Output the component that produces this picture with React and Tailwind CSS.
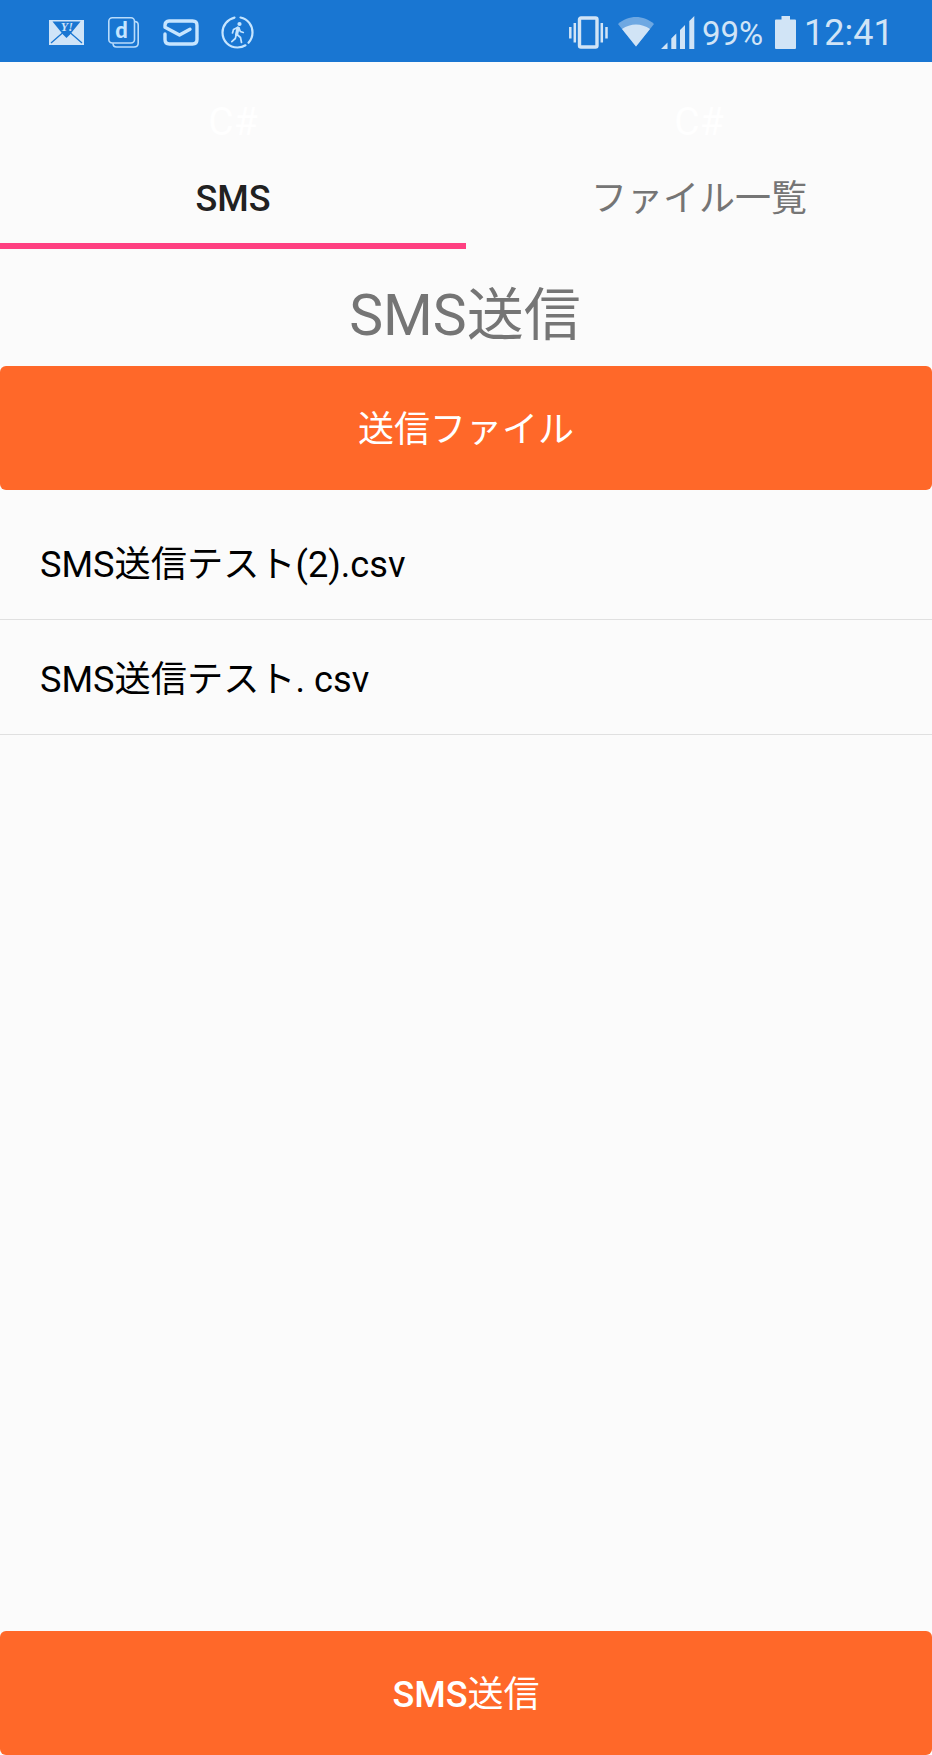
import React, { useState } from 'react';

const tabs = [
  { id: "sms", label: "SMS" },
  { id: "files", label: "ファイル一覧" },
];

const files = ["SMS送信テスト(2).csv", "SMS送信テスト. csv"];

const YahooMailIcon = () => (
  <svg width="35" height="25" viewBox="0 0 35 25">
    <rect width="35" height="25" fill="#cfe4f8" />
    <path d="M3.5 1.5H31.5L21 14.5L17.5 18L14 14.5Z" fill="#1976d2" />
    <path d="M2 23L14 12.5M33 23L21 12.5" stroke="#1976d2" strokeWidth="1.3" />
    <text x="17.8" y="10.5" textAnchor="middle" fontFamily="Liberation Serif, serif" fontSize="12" fontWeight="700" fontStyle="italic" fill="#cfe4f8">Y!</text>
  </svg>
);

const DocomoIcon = () => (
  <svg width="31" height="31" viewBox="0 0 31 31" fill="none" stroke="#b9dcfb" strokeWidth="1.6">
    <rect x="0.8" y="0.8" width="25.7" height="25.2" rx="3.5" />
    <path d="M26.5 4.5C29 4.5 30.2 5.5 30.2 8V26C30.2 29 29 30 26 30H8.5C6 30 5 28.8 5 26.3" />
    <text x="13.5" y="20.5" textAnchor="middle" fontFamily="Lato, sans-serif" fontSize="22" fontWeight="900" fill="#c6e5ff" stroke="none">d</text>
  </svg>
);

const MailIcon = () => (
  <svg width="36" height="27" viewBox="0 0 36 27" fill="none" stroke="#c6e5ff" strokeWidth="3.4" strokeLinejoin="round" strokeLinecap="round">
    <path d="M2 15V20.5C2 23.5 3.5 25 6.5 25H29.5C32.5 25 34 23.5 34 20.5V6.5C34 3.5 32.5 2 29.5 2H6C3.5 2 2 3.8 2 6.2V8.2L16.5 16L27 10.3" />
  </svg>
);

const WalkIcon = () => (
  <svg width="33" height="33" viewBox="0 0 33 33" fill="none" stroke="#c6e5ff" strokeLinecap="round" strokeLinejoin="round">
    <path d="M19.5 1.5C27 3 31.5 9.5 31.5 16.5C31.5 20.5 30 24 27.5 26.8M24.5 29.3C22 30.9 19.5 31.5 16.5 31.5C8 31.5 1.5 25 1.5 16.5C1.5 9.3 6.5 3.3 13.5 1.6" strokeWidth="2.2" />
    <circle cx="18.5" cy="8" r="2.1" fill="#c6e5ff" stroke="none" />
    <path d="M17 12L15.6 18.5" strokeWidth="3.2" />
    <path d="M16.5 11.5L12.5 13.5L11.5 17M18 12L19.3 15.5L22.3 16.5M16 18.5L19.5 21.5L20.5 26.5M15.3 18.5L14.3 22.5L10.8 25.7" strokeWidth="1.7" />
  </svg>
);

const VibrateIcon = () => (
  <svg width="39" height="33" viewBox="0 0 39 33">
    <rect x="10.5" y="2" width="17.5" height="29" rx="1.5" fill="none" stroke="#d1e4f6" strokeWidth="3.4" />
    <path d="M1.3 11V22.5M5.8 7V26.5M32.8 7V26.5M37.5 11V22.5" stroke="#d1e4f6" strokeWidth="2.5" />
  </svg>
);

const WifiIcon = () => (
  <svg width="36" height="30" viewBox="0 0 36 30">
    <path d="M0 7C10.5 -2.3 25.5 -2.3 36 7L18 29.5Z" fill="#6ea8e2" />
    <path d="M4 12C12.5 6 23.5 6 32 12L18 29.5Z" fill="#d1e4f6" />
  </svg>
);

const SignalIcon = () => (
  <svg width="34" height="33" viewBox="0 0 34 33" fill="#d1e4f6">
    <path d="M0 33L6.5 26.5V33ZM10.3 22.5L15.3 17.5V33H10.3ZM19 14L24 9V33H19ZM28.3 5L33.3 0V33H28.3Z" />
  </svg>
);

const BatteryIcon = () => (
  <svg width="21" height="33" viewBox="0 0 21 33" fill="#d1e4f6">
    <path d="M6.5 0H15V3.5H20Q21 3.5 21 4.5V32Q21 33 20 33H1Q0 33 0 32V4.5Q0 3.5 1 3.5H6.5Z" />
  </svg>
);

const App = () => {
  const [activeTab, setActiveTab] = useState("sms");

  return (
    <div className="flex h-[1755px] w-[932px] flex-col overflow-hidden bg-[#fbfbfb] font-['Roboto','Noto_Sans_CJK_JP',sans-serif]">
      {/* Status Bar */}
      <header className="flex h-[62px] shrink-0 items-center bg-[#1976d2] pt-[2px] pl-[49px] text-[#d1e4f6]">
        <YahooMailIcon />
        <div className="ml-6"><DocomoIcon /></div>
        <div className="ml-6"><MailIcon /></div>
        <div className="ml-[22px]"><WalkIcon /></div>
        <div className="ml-[315px]"><VibrateIcon /></div>
        <div className="ml-[10px]"><WifiIcon /></div>
        <div className="ml-[7px]"><SignalIcon /></div>
        <span className="ml-[7px] w-[73px] pt-[3px] text-[33px] leading-[57px] whitespace-nowrap">99%</span>
        <BatteryIcon />
        <span className="ml-[8px] pt-[3px] text-[36px] leading-[57px] whitespace-nowrap">12:41</span>
      </header>

      {/* Tabs */}
      <nav className="flex h-[187px] shrink-0">
        {tabs.map((tab) => (
          <button
            key={tab.id}
            onClick={() => setActiveTab(tab.id)}
            className={`flex w-[466px] flex-col items-center border-b-[6px] pt-[33px] text-[36px] ${
              activeTab === tab.id
                ? "border-[#ff4081] font-medium text-[#212121]"
                : "border-transparent font-normal text-[#757575]"
            }`}
          >
            <span className="text-[39px] leading-[54px] font-normal text-white">C#</span>
            <span className="mt-[24px] leading-[52px]">{tab.label}</span>
          </button>
        ))}
      </nav>

      <h1 className="h-[117px] shrink-0 pt-[7px] pr-[2px] text-center text-[57px] leading-[120px] text-[#757575]">SMS送信</h1>

      <button className="h-[124px] shrink-0 rounded-[6px] bg-[#ff6829] pt-[4px] text-[36px] text-white">
        送信ファイル
      </button>

      {/* File List */}
      <ul className="flex-1 pt-[15px]">
        {files.map((file) => (
          <li key={file} className="h-[115px] border-b border-[#e0e0e0] pl-10 text-[36.2px] leading-[120px] text-black">
            {file}
          </li>
        ))}
      </ul>

      <button className="h-[124px] shrink-0 rounded-[6px] bg-[#ff6829] pt-[4px] text-[36px] text-white">
        <span className="font-medium">SMS</span>送信
      </button>
    </div>
  );
};

export default App;
